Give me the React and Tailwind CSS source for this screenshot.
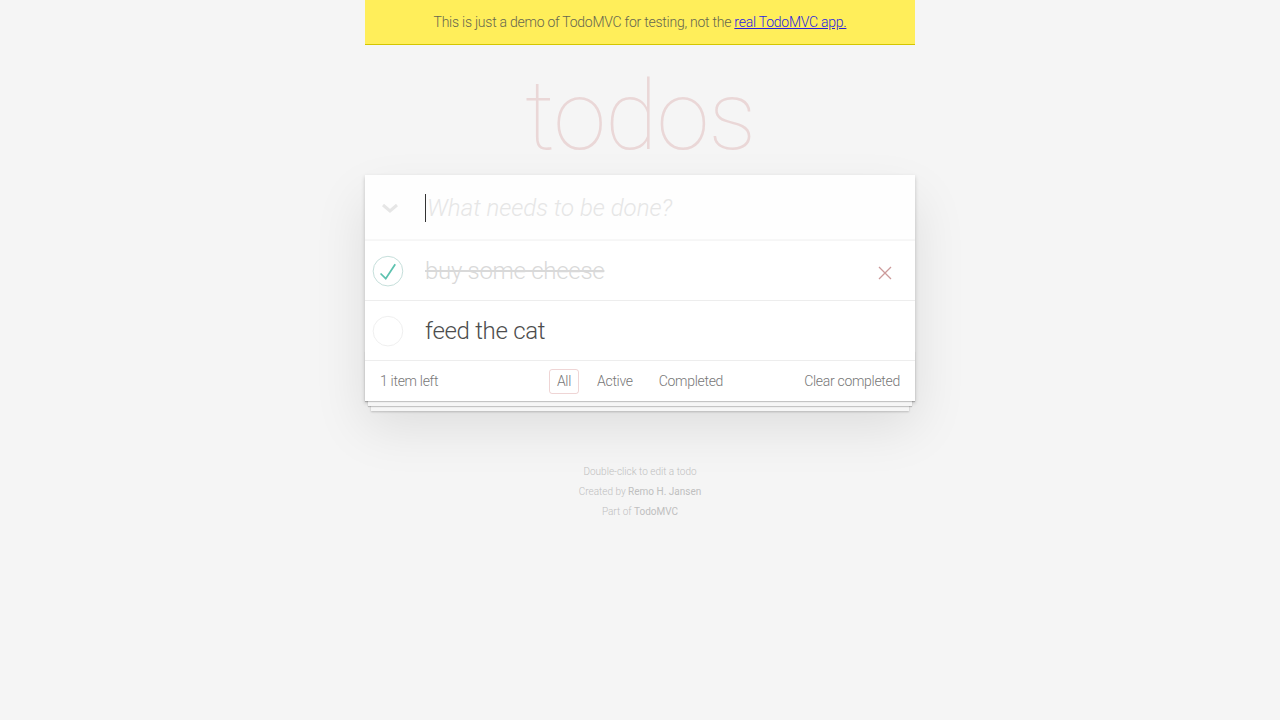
import { useState } from 'react';

const CircleToggle = ({ done }) => (
  <svg width="40" height="40" viewBox="-10 -18 100 135" className="shrink-0">
    <circle cx="50" cy="50" r="50" fill="none" stroke={done ? '#bddad5' : '#ededed'} strokeWidth="3" />
    {done && <path fill="#5dc2af" d="M72 25L42 71 27 56l-4 4 20 20 34-52z" />}
  </svg>
);

const App = () => {
  const [todos] = useState([
    { id: 1, title: 'buy some cheese', completed: true },
    { id: 2, title: 'feed the cat', completed: false },
  ]);
  const left = todos.filter((t) => !t.completed).length;

  return (
    <div className="min-h-screen bg-[#f5f5f5] font-['Roboto','Helvetica_Neue',Arial,sans-serif] font-light text-[14px] text-[#4d4d4d]">
      <div className="mx-auto w-[550px]">
        {/* Demo banner */}
        <div className="h-[45px] bg-[#ffee5a] border-b border-[#d4c600] flex items-center justify-center text-[14px] text-[#666650] tracking-[-0.25px]">
          <span>
            This is just a demo of TodoMVC for testing, not the{' '}
            <a href="#" className="text-[#2a1ee0] underline">real TodoMVC app.</a>
          </span>
        </div>

        {/* Title */}
        <h1 className="h-[130px] flex items-start justify-center pt-[23px] text-[96px] leading-none font-thin text-[rgba(175,47,47,0.15)] tracking-[-1px]">
          todos
        </h1>

        {/* App card */}
        <section className="bg-white shadow-[0_2px_4px_0_rgba(0,0,0,0.2),0_25px_50px_0_rgba(0,0,0,0.1)]">
          <div className="h-[66px] flex items-center shadow-[inset_0_-2px_1px_rgba(0,0,0,0.03)] bg-[rgba(0,0,0,0.003)]">
            <div className="w-[60px] flex items-center justify-center">
              <svg width="18" height="10" viewBox="0 0 18 10" className="ml-[-10px]">
                <polyline points="2,2 9,8 16,2" fill="none" stroke="#e6e6e6" strokeWidth="3" strokeLinejoin="miter" />
              </svg>
            </div>
            <div className="flex items-center text-[24px] italic text-[#e6e6e6]">
              <span className="w-px h-[28px] bg-[#333] mr-px" />
              What needs to be done?
            </div>
          </div>

          <ul>
            {todos.map((t) => (
              <li key={t.id} className="h-[60px] flex items-center border-b border-[#ededed] text-[24px] tracking-[-0.3px]">
                <CircleToggle done={t.completed} />
                <span className={`ml-5 flex-1 ${t.completed ? 'text-[#d9d9d9] line-through' : 'text-[#4d4d4d]'}`}>
                  {t.title}
                </span>
                {t.completed && (
                  <div className="w-10 h-10 mr-[10px] mt-[4px] flex items-center justify-center">
                    <svg width="14" height="14" viewBox="0 0 14 14">
                      <path d="M1 1L13 13M13 1L1 13" stroke="#cc9a9a" strokeWidth="1.3" />
                    </svg>
                  </div>
                )}
              </li>
            ))}
          </ul>

          <footer className="relative h-[40px] px-[15px] grid grid-cols-[1fr_auto_1fr] items-center text-[14px] text-[#777]">
            <div className="absolute inset-x-0 bottom-0 h-[50px] overflow-hidden pointer-events-none shadow-[0_1px_1px_rgba(0,0,0,0.2),0_8px_0_-3px_#f6f6f6,0_9px_1px_-3px_rgba(0,0,0,0.2),0_16px_0_-6px_#f6f6f6,0_17px_2px_-6px_rgba(0,0,0,0.2)]" />
            <span className="relative tracking-[-0.3px]">{left} item left</span>
            <ul className="relative flex items-center gap-[10px] tracking-[-0.3px]">
              <li><a href="#" className="inline-flex items-center h-[25px] px-[7px] border border-[rgba(175,47,47,0.2)] rounded-[3px]">All</a></li>
              <li><a href="#" className="inline-flex items-center h-[25px] px-[7px] border border-transparent rounded-[3px]">Active</a></li>
              <li><a href="#" className="inline-flex items-center h-[25px] px-[7px] border border-transparent rounded-[3px]">Completed</a></li>
            </ul>
            <span className="relative text-right tracking-[-0.3px]">Clear completed</span>
          </footer>
        </section>

        {/* Info */}
        <footer className="mt-[66px] text-center text-[10px] leading-none text-[#bfbfbf] flex flex-col gap-[10px]">
          <p>Double-click to edit a todo</p>
          <p>Created by <a href="#" className="font-normal">Remo H. Jansen</a></p>
          <p>Part of <a href="#" className="font-normal">TodoMVC</a></p>
        </footer>
      </div>
    </div>
  );
};

export default App;
